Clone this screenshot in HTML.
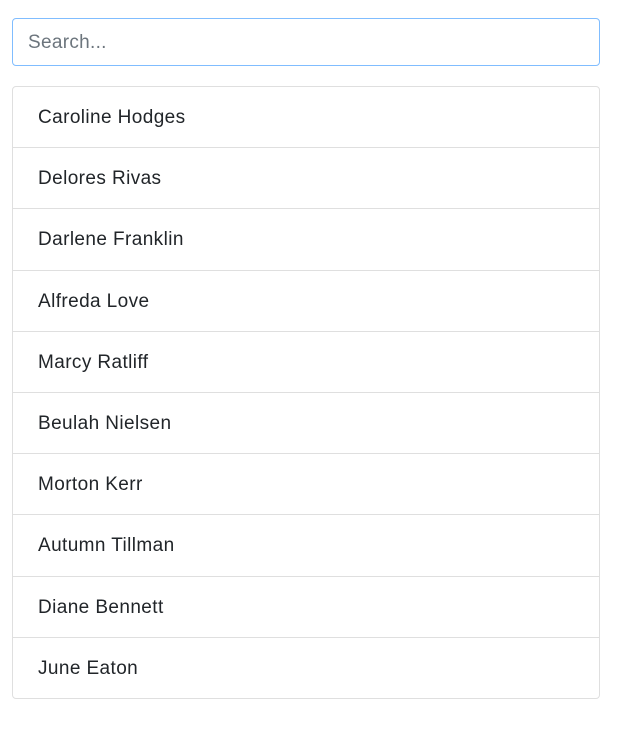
<!DOCTYPE html>
<html><head><style>
body{margin:0;background:#fff;font-family:"Liberation Sans",sans-serif;}
.s{position:absolute;left:12px;top:18px;width:586px;height:46px;border:1px solid #80bdff;border-radius:4px;box-sizing:content-box;}
.s span{position:absolute;left:15px;top:13px;font-size:19px;color:#6c757d;letter-spacing:0.3px;}
.l{position:absolute;left:12px;top:86px;width:586px;border:1px solid #dfdfdf;border-radius:4px;}
.i{height:60.2px;overflow:hidden;border-top:1px solid #dfdfdf;font-size:19px;color:#212529;line-height:62px;padding-left:25px;letter-spacing:0.4px;}
.i:first-child{border-top:none;}
</style></head><body>
<div class="s"><span>Search...</span></div>
<div class="l">
<div class="i">Caroline Hodges</div>
<div class="i">Delores Rivas</div>
<div class="i">Darlene Franklin</div>
<div class="i">Alfreda Love</div>
<div class="i">Marcy Ratliff</div>
<div class="i">Beulah Nielsen</div>
<div class="i">Morton Kerr</div>
<div class="i">Autumn Tillman</div>
<div class="i">Diane Bennett</div>
<div class="i">June Eaton</div>
</div>
</body></html>
